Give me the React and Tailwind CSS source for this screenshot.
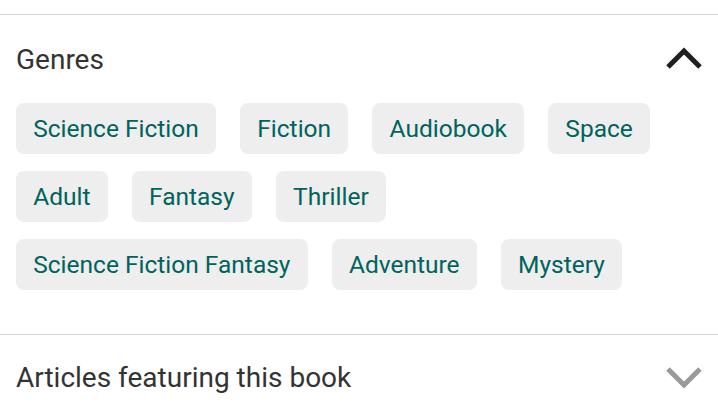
import React from "react";

const genres = [
  "Science Fiction",
  "Fiction",
  "Audiobook",
  "Space",
  "Adult",
  "Fantasy",
  "Thriller",
  "Science Fiction Fantasy",
  "Adventure",
  "Mystery",
];

function ChevronUp() {
  return (
    <svg width="36" height="22" viewBox="0 0 36 22" fill="none">
      <polyline points="2,20 18,4 34,20" stroke="#1e1e1e" strokeWidth="5" strokeLinejoin="miter" />
    </svg>
  );
}

function ChevronDown() {
  return (
    <svg width="36" height="22" viewBox="0 0 36 22" fill="none">
      <polyline points="2,2 18,18 34,2" stroke="#9a9a9a" strokeWidth="5" strokeLinejoin="miter" />
    </svg>
  );
}

export default function App() {
  return (
    <div className="w-[718px] h-[419px] overflow-hidden bg-white pt-[14px]" style={{ fontFamily: "Roboto, 'Noto Sans', sans-serif" }}>
      <section className="border-t border-[#d6d6d6] px-4 pb-[44px]">
        <div className="flex h-[88px] items-center justify-between pt-[2px]">
          <h2 className="text-[28px] leading-[28px] text-[#333333]">Genres</h2>
          <div className="-mt-[5px]"><ChevronUp /></div>
        </div>
        <div className="flex w-[680px] flex-wrap gap-x-[24px] gap-y-[17px]">
          {genres.map((g) => (
            <span
              key={g}
              className="flex h-[51px] items-center rounded-[8px] bg-[#eeeeee] px-[17.25px] text-[24.5px] leading-[25px] text-[#00635d]"
            >
              {g}
            </span>
          ))}
        </div>
      </section>
      <section className="border-t border-[#d6d6d6] px-4">
        <div className="flex h-[88px] items-center justify-between pb-[2px]">
          <h2 className="text-[28px] leading-[28px] text-[#333333]">Articles featuring this book</h2>
          <div className="-mt-[1px]"><ChevronDown /></div>
        </div>
      </section>
    </div>
  );
}
